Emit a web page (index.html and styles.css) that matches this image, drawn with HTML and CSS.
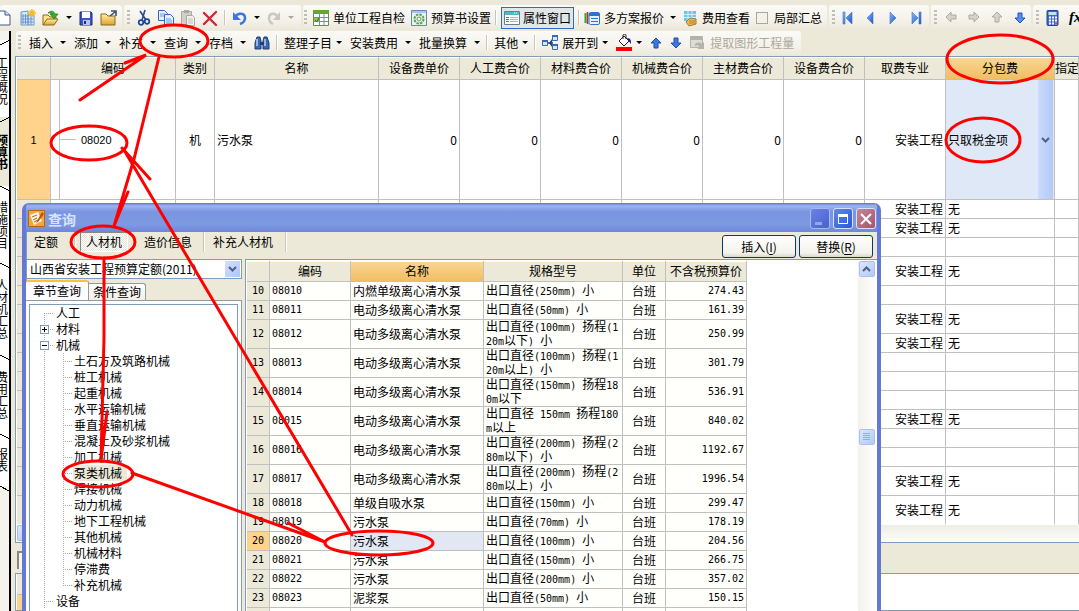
FILE: index.html
```html
<!DOCTYPE html>
<html lang="zh-CN">
<head>
<meta charset="utf-8">
<title>预算书</title>
<link rel="stylesheet" href="styles.css">
</head>
<body>
<svg class="defs" aria-hidden="true">
  <defs>
    <linearGradient id="blue" x1="0" y1="0" x2="1" y2="1"><stop offset="0" stop-color="#8db8ff"/><stop offset="1" stop-color="#1d55c8"/></linearGradient>
    <linearGradient id="gold" x1="0" y1="0" x2="0" y2="1"><stop offset="0" stop-color="#fff0a8"/><stop offset="1" stop-color="#e0a030"/></linearGradient>
    <symbol id="arrow-up" viewBox="0 0 12 16"><path d="M6 3l5 5H8v5H4V8H1z"/></symbol>
    <symbol id="arrow-down" viewBox="0 0 12 16"><path d="M6 13l5-5H8V3H4v5H1z"/></symbol>
  </defs>
</svg>

<header class="bar bar-main">
  <div class="group group-first">
    <button class="tool" aria-label="新建"><svg width="14" height="18" viewBox="0 0 14 18"><path d="M-4 2h9l5 4v10H-4z" fill="#fff" stroke="#3c5a88"/><path d="M5 2v4h5" fill="#cfe0ff" stroke="#3c5a88"/></svg></button>
    <button class="tool" aria-label="新建工程"><svg width="16" height="18" viewBox="0 0 16 18"><path d="M1 3l7-1v14H1zM8 6h6v10H8z" fill="#dbe9fb" stroke="#6b94cc"/><path d="M3 5v10M5.500 5v10M1 7h7M1 10h12M1 13h12M11 7v9" stroke="#6b94cc"/><path d="M12 0v8M8 4h8M9.500 1.500l5 5M14.500 1.500l-5 5" stroke="#f4bd20" stroke-width="1.500"/></svg></button>
    <button class="tool" aria-label="打开"><svg width="18" height="18" viewBox="0 0 18 18"><path d="M1 16V6h5l2 2h6v3" fill="#ffe58a" stroke="#8a6a1c"/><path d="M1 16l4-6h11l-4 6z" fill="url(#gold)" stroke="#8a6a1c"/><path d="M6 4c3-3 6-2 7 1h3l-4 5-4-5h3C10 4 8 4 6 4z" fill="#38b02c" stroke="#156e13" stroke-width=".6"/></svg></button>
    <button class="caret" aria-label="打开选项"></button>
    <button class="tool" aria-label="保存"><svg width="16" height="18" viewBox="0 0 16 18"><path d="M2 3h11l1 1v12H2z" fill="#3e55c4" stroke="#1c2a80"/><path d="M4 3h8v6H4z" fill="#fff"/><path d="M5 11h7v5H5z" fill="#b8c4ec"/><path d="M6 12h2v3H6z" fill="#1c2a80"/></svg></button>
    <button class="tool" aria-label="关闭工程"><svg width="18" height="18" viewBox="0 0 18 18"><path d="M1 16V5h5l2 2h7v9z" fill="url(#gold)" stroke="#8a6a1c"/><path d="M10 7l5-4m-4-1h5v5" fill="none" stroke="#3b5070" stroke-width="1.600"/></svg></button>
  </div>
  <div class="group">
    <span class="grip"></span>
    <button class="tool" aria-label="剪切"><svg width="16" height="18" viewBox="0 0 16 18"><path d="M4 2l6 9M9 1L6 11" stroke="#2c4c88" stroke-width="1.600"/><circle cx="5" cy="13.500" r="2.300" fill="none" stroke="#17469c" stroke-width="1.700"/><circle cx="11" cy="12.500" r="2.300" fill="none" stroke="#17469c" stroke-width="1.700"/></svg></button>
    <button class="tool" aria-label="复制"><svg width="16" height="18" viewBox="0 0 16 18"><path d="M0.500 1.500h6l3 3v7h-9z" fill="#e4efff" stroke="#3568bc"/><path d="M6.500 5.500h6l3 3v8h-9z" fill="#e4efff" stroke="#3568bc"/><path d="M2 5h5M2 7h4M8 10h5M8 12h6M8 14h6" stroke="#6d9be0"/></svg></button>
    <button class="tool" aria-label="粘贴" disabled><svg width="16" height="18" viewBox="0 0 16 18"><path d="M1.500 2.500h10v13h-10z" fill="#d0cfc9" stroke="#aaa9a0"/><path d="M4 1h5v3H4z" fill="#aaa9a0"/><path d="M6.500 6.500h6l2 2v8h-8z" fill="#f2f1ec" stroke="#aaa9a0"/><path d="M8 10h5M8 12h5M8 14h5" stroke="#c0bfb8"/></svg></button>
    <button class="tool" aria-label="删除"><svg width="16" height="18" viewBox="0 0 16 18"><path d="M2 4l12 12M14 3L2 15" stroke="#d42438" stroke-width="2.400" stroke-linecap="round"/></svg></button>
    <span class="sep"></span>
    <button class="tool" aria-label="撤销"><svg width="16" height="18" viewBox="0 0 16 18"><path d="M3 8c3-5 10-4 10 1 0 3-2 5-5 6" fill="none" stroke="#3c78dc" stroke-width="2.600"/><path d="M1 3v8h8z" fill="#3c78dc"/></svg></button>
    <button class="caret" aria-label="撤销列表"></button>
    <button class="tool" aria-label="恢复" disabled><svg width="16" height="18" viewBox="0 0 16 18"><path d="M12 8C9 3 3 4 3 9c0 3 2 5 4 6" fill="none" stroke="#c8c7c0" stroke-width="2.400"/><path d="M14 3v8H7z" fill="#c8c7c0"/></svg></button>
    <button class="caret caret-off" aria-label="恢复列表" disabled></button>
  </div>
  <div class="group group-tight">
    <span class="grip"></span>
    <button class="tool"><svg width="16" height="18" viewBox="0 0 16 18"><path d="M.5 1.500h15v15H.5z" fill="#fff" stroke="#6a8a50"/><path d="M0 1h16v4H0z" fill="#62a82c"/><path d="M1 8.500h14M1 12.500h14M6.500 5v11M11 5v11" stroke="#7c8c9c"/><path d="M1 9h5v4H1z" fill="#8cc850"/><path d="M2 11l1.500 2L6 9" fill="none" stroke="#286a10"/></svg>单位工程自检</button>
    <button class="tool"><svg width="16" height="18" viewBox="0 0 16 18"><path d="M.5 1.500h15v15H.5z" fill="#e8f4e4" stroke="#6686b8"/><path d="M1 2h14v2H1z" fill="#a8c4ec"/><circle cx="8" cy="10" r="4.500" fill="none" stroke="#58a058" stroke-width="2" stroke-dasharray="2.500 1"/><circle cx="8" cy="10" r="2" fill="#fff" stroke="#58a058"/></svg>预算书设置</button>
    <span class="sep"></span>
    <button class="tool tool-on" aria-pressed="true"><svg width="16" height="18" viewBox="0 0 16 18"><path d="M.5 2.500h15v13H.5z" fill="#fff" stroke="#6a7a90"/><path d="M1 3h14v3H1z" fill="#4cbcc0"/><path d="M10 4h1m1 0h1" stroke="#fff"/><path d="M2 8.500h3M2 10.500h3M2 12.500h3" stroke="#4878b8"/><path d="M6 8.500h8M6 10.500h8M6 12.500h8" stroke="#a8b4c0"/></svg>属性窗口</button>
    <span class="sep"></span>
    <button class="tool"><svg width="16" height="18" viewBox="0 0 16 18"><path d="M1.500 4v10" stroke="#1cb030" stroke-width="2"/><path d="M3.500 3v12" stroke="#e02020" stroke-width="1.500"/><rect x="5" y="3.500" width="10.500" height="12" rx="1.500" fill="#e6f0ff" stroke="#2c70dc"/><path d="M5 4h10v3H5z" fill="#2c70dc"/><path d="M7 9.500h7M7 12.500h7" stroke="#2c70dc"/></svg>多方案报价</button>
    <button class="caret" aria-label="多方案报价选项"></button>
    <button class="tool"><svg width="16" height="18" viewBox="0 0 16 18"><path d="M2 2h12v10H2z" fill="#68c8ec"/><path d="M2 5.500h12M2 8.500h12M6 2v10M10 2v10" stroke="#d4f2fc"/><path d="M4 13l4-4 6 1v5l-7 2z" fill="#eab858" stroke="#a87828"/><path d="M7 12h6M7 14h6" stroke="#a87828" stroke-width=".8"/></svg>费用查看</button>
    <input class="check" type="checkbox" id="partial"><label for="partial">局部汇总</label>
  </div>
  <div class="group group-nav">
    <span class="grip"></span>
    <button class="tool" aria-label="首条"><svg width="16" height="18" viewBox="0 0 16 18"><path d="M1 3h2v12H1zM10 3v12L4 9z" fill="url(#blue)" stroke="#3a70d8" stroke-width=".6"/></svg></button>
    <button class="tool" aria-label="上一条"><svg width="16" height="18" viewBox="0 0 16 18"><path d="M8 3v12L2 9z" fill="url(#blue)" stroke="#3a70d8" stroke-width=".6"/></svg></button>
    <button class="tool" aria-label="下一条"><svg width="16" height="18" viewBox="0 0 16 18"><path d="M2 3v12l6-6z" fill="url(#blue)" stroke="#3a70d8" stroke-width=".6"/></svg></button>
    <button class="tool" aria-label="末条"><svg width="16" height="18" viewBox="0 0 16 18"><path d="M8 3h2v12H8zM1 3v12l6-6z" fill="url(#blue)" stroke="#3a70d8" stroke-width=".6"/></svg></button>
  </div>
  <div class="group group-nav">
    <span class="grip"></span>
    <button class="tool" aria-label="左移" disabled><svg width="16" height="18" viewBox="0 0 16 18"><path d="M2 8l5-5v3h5v4H7v3z" fill="#d4d3cc" stroke="#aaa9a2"/></svg></button>
    <button class="tool" aria-label="右移" disabled><svg width="16" height="18" viewBox="0 0 16 18"><path d="M12 8L7 3v3H2v4h5v3z" fill="#d4d3cc" stroke="#aaa9a2"/></svg></button>
    <button class="tool" aria-label="上移" disabled><svg width="16" height="18" viewBox="0 0 16 18"><path d="M7 3l5 5H9v5H5V8H2z" fill="#d4d3cc" stroke="#aaa9a2"/></svg></button>
    <button class="tool" aria-label="下移"><svg width="16" height="18" viewBox="0 0 16 18"><path d="M7 14l5-5H9V4H5v5H2z" fill="#5890f0" stroke="#1c50b8"/></svg></button>
  </div>
  <div class="group group-nav group-last">
    <span class="grip"></span>
    <button class="tool" aria-label="计算器"><svg width="16" height="18" viewBox="0 0 16 18"><rect x="1" y="1.500" width="11" height="15" rx="1" fill="#3c68c8" stroke="#24428c"/><path d="M2.500 3h8v3h-8z" fill="#c0e4f8"/><path d="M3 8.500h8M3 11.500h8M3 14.500h8" stroke="#fff" stroke-width="2" stroke-dasharray="2 1"/><path d="M9 14.500h2" stroke="#f04040" stroke-width="2"/></svg></button>
    <button class="tool fx" aria-label="函数">fx</button>
  </div>
</header>

<div class="desk">
  <nav class="rail">
    <a class="rail-tab rise t1" href="#">工程概况</a>
    <a class="rail-tab rise t2 current" href="#">预算书</a>
    <a class="rail-tab t3" href="#">措施项目</a>
    <a class="rail-tab t4" href="#">人材机汇总</a>
    <a class="rail-tab t5" href="#">费用汇总</a>
    <a class="rail-tab t6" href="#">报表</a>
    <span class="rail-end"></span>
  </nav>

  <main class="work">
    <div class="bar bar-edit">
      <div class="group group-edit">
        <span class="grip"></span>
        <button class="drop">插入<i class="caret"></i></button>
        <button class="drop">添加<i class="caret"></i></button>
        <button class="drop">补充<i class="caret"></i></button>
        <button class="drop">查询<i class="caret"></i></button>
        <button class="drop">存档<i class="caret"></i></button>
        <button class="tool" aria-label="查找"><svg width="16" height="18" viewBox="0 0 16 18"><path d="M3 3h3l1 4v8H1V9zM13 3h-3L9 7v8h6V9z" fill="#3c68b0" stroke="#203c74"/><path d="M6 8h4v3H6z" fill="#203c74"/><path d="M3 5v7M11 5v7" stroke="#b8d0f4" stroke-width="1.500"/></svg></button>
        <span class="sep"></span>
        <button class="drop snug">整理子目<i class="caret"></i></button>
        <button class="drop">安装费用<i class="caret"></i></button>
        <button class="drop">批量换算<i class="caret"></i></button>
        <span class="sep"></span>
        <button class="drop snug">其他<i class="caret"></i></button>
        <span class="sep"></span>
        <button class="drop snug"><svg width="16" height="18" viewBox="0 0 16 18"><path d="M5 9h6M8 9l3-4M8 9l3 4" stroke="#203c74" stroke-width="1.500"/><path d="M.5 6.500h5v5h-5zM10.500 1.500h5v5h-5zM10.500 10.500h5v5h-5z" fill="#d8e8fc" stroke="#3c68b8"/><path d="M0 6h6v2H0zM10 1h6v2h-6zM10 10h6v2h-6z" fill="#3c68b8"/></svg>展开到<i class="caret"></i></button>
        <button class="drop snug" aria-label="填充颜色"><svg width="16" height="18" viewBox="0 0 16 18"><path d="M3 7l5-5 5 5-5 5z" fill="#fff" stroke="#222"/><path d="M7 5V1c0-1 3-1 3 0v4" fill="none" stroke="#222"/><path d="M11 4c4 0 4 3 4 6l-3-4z" fill="#10208c"/><path d="M0 13h16v4H0z" fill="#f00"/></svg><i class="caret"></i></button>
        <button class="tool arrow" aria-label="上移"><svg width="12" height="16"><use href="#arrow-up"/></svg></button>
        <button class="tool arrow" aria-label="下移"><svg width="12" height="16"><use href="#arrow-down"/></svg></button>
        <button class="tool" disabled><svg width="16" height="18" viewBox="0 0 16 18"><path d="M.5 2.500h12v11H.5z" fill="#dcdbd4" stroke="#b4b3aa"/><path d="M1 3h11v3H1z" fill="#b4b3aa"/><path d="M5 10c4-3 6-1 7 0l2-2v7H7l3-2c-2-2-3-2-5-1z" fill="#b4b3aa"/></svg>提取图形工程量</button>
      </div>
    </div>

    <section class="frame">
      <table class="sheet">
        <colgroup><col class="c-num"><col class="c-code"><col class="c-kind"><col class="c-name"><col class="c-fee"><col class="c-fee"><col class="c-fee"><col class="c-fee"><col class="c-fee"><col class="c-fee"><col class="c-fee"><col class="c-sub"><col></colgroup>
        <thead><tr><th></th><th>编码</th><th>类别</th><th>名称</th><th>设备费单价</th><th>人工费合价</th><th>材料费合价</th><th>机械费合价</th><th>主材费合价</th><th>设备费合价</th><th>取费专业</th><th class="hot">分包费</th><th class="cut">指定</th></tr></thead>
        <tbody>
          <tr class="r-big"><th class="picked">1</th><td class="branch">08020</td><td class="mid">机</td><td>污水泵</td><td class="num">0</td><td class="num">0</td><td class="num">0</td><td class="num">0</td><td class="num">0</td><td class="num">0</td><td class="num">安装工程</td><td class="editing"><select aria-label="分包费"><option>只取税金项</option><option>无</option></select></td><td></td></tr>
          <tr><th></th><td></td><td></td><td></td><td></td><td></td><td></td><td></td><td></td><td></td><td class="num">安装工程</td><td>无</td><td></td></tr>
          <tr><th></th><td></td><td></td><td></td><td></td><td></td><td></td><td></td><td></td><td></td><td class="num">安装工程</td><td>无</td><td></td></tr>
          <tr><th></th><td></td><td></td><td></td><td></td><td></td><td></td><td></td><td></td><td></td><td></td><td></td><td></td></tr>
          <tr class="r-two"><th></th><td></td><td></td><td></td><td></td><td></td><td></td><td></td><td></td><td></td><td class="num">安装工程</td><td>无</td><td></td></tr>
          <tr><th></th><td></td><td></td><td></td><td></td><td></td><td></td><td></td><td></td><td></td><td></td><td></td><td></td></tr>
          <tr class="r-two"><th></th><td></td><td></td><td></td><td></td><td></td><td></td><td></td><td></td><td></td><td class="num">安装工程</td><td>无</td><td></td></tr>
          <tr><th></th><td></td><td></td><td></td><td></td><td></td><td></td><td></td><td></td><td></td><td class="num">安装工程</td><td>无</td><td></td></tr>
          <tr><th></th><td></td><td></td><td></td><td></td><td></td><td></td><td></td><td></td><td></td><td></td><td></td><td></td></tr>
          <tr><th></th><td></td><td></td><td></td><td></td><td></td><td></td><td></td><td></td><td></td><td></td><td></td><td></td></tr>
          <tr><th></th><td></td><td></td><td></td><td></td><td></td><td></td><td></td><td></td><td></td><td></td><td></td><td></td></tr>
          <tr><th></th><td></td><td></td><td></td><td></td><td></td><td></td><td></td><td></td><td></td><td class="num">安装工程</td><td>无</td><td></td></tr>
          <tr><th></th><td></td><td></td><td></td><td></td><td></td><td></td><td></td><td></td><td></td><td></td><td></td><td></td></tr>
          <tr><th></th><td></td><td></td><td></td><td></td><td></td><td></td><td></td><td></td><td></td><td></td><td></td><td></td></tr>
          <tr class="r-two"><th></th><td></td><td></td><td></td><td></td><td></td><td></td><td></td><td></td><td></td><td class="num">安装工程</td><td>无</td><td></td></tr>
          <tr class="r-two r-end"><th></th><td></td><td></td><td></td><td></td><td></td><td></td><td></td><td></td><td></td><td class="num">安装工程</td><td>无</td><td></td></tr>
        </tbody>
      </table>
      <div class="hscroll"><button class="scroll-btn" aria-label="向左滚动"></button></div>
    </section>
    <div class="gap-strip"><span class="mini-tab"></span></div>
    <section class="frame frame-low"><div class="low-head"></div><div class="low-row"></div></section>
  </main>
</div>

<section class="dialog" role="dialog" aria-labelledby="dlg-title">
  <div class="titlebar">
    <svg width="17" height="17" viewBox="0 0 17 17"><path d="M.5.5h16v16H.5z" fill="#f0a838" stroke="#b86808"/><path d="M2 5l8-3 4 9-8 4z" fill="#fff8e0"/><path d="M4 7l5-2M5 10l4-2M6 12l4-2" stroke="#a86818"/><path d="M14 2l-5 9-1 2 2-1 6-8z" fill="#b8501c"/></svg>
    <h1 id="dlg-title">查询</h1>
    <button class="win" aria-label="最小化"><svg width="18" height="18"><path d="M4 12h7v3H4z" fill="#8fa8f0"/></svg></button>
    <button class="win win-max" aria-label="最大化"><svg width="18" height="18"><path d="M4.500 4.500h9v9h-9z" fill="none" stroke="#fff"/><path d="M4 4h10v3H4z" fill="#fff"/></svg></button>
    <button class="win win-close" aria-label="关闭"><svg width="18" height="18"><path d="M4 4l10 10M14 4L4 14" stroke="#fff" stroke-width="2"/></svg></button>
  </div>
  <div class="modes">
    <button class="mode">定额</button><span class="sep"></span>
    <button class="mode mode-on" aria-pressed="true">人材机</button>
    <button class="mode">造价信息</button><span class="sep"></span>
    <button class="mode">补充人材机</button><span class="sep"></span>
    <div class="actions"><button class="push">插入(<u>I</u>)</button><button class="push">替换(<u>R</u>)</button></div>
  </div>
  <div class="panes">
    <aside class="side">
      <select class="book" aria-label="定额库"><option>山西省安装工程预算定额(2011)</option></select>
      <div class="tabs" role="tablist"><button class="tab tab-on" role="tab" aria-selected="true">章节查询</button><button class="tab" role="tab">条件查询</button></div>
      <div class="tabpane">
        <ul class="tree">
          <li>人工</li>
          <li><button class="twist" aria-label="展开"><svg width="9" height="9"><path d="M2 4.500h5M4.500 2v5" stroke="#000"/></svg></button>材料</li>
          <li><button class="twist" aria-label="折叠"><svg width="9" height="9"><path d="M2 4.500h5" stroke="#000"/></svg></button>机械
            <ul>
              <li>土石方及筑路机械</li><li>桩工机械</li><li>起重机械</li><li>水平运输机械</li><li>垂直运输机械</li><li>混凝土及砂浆机械</li><li>加工机械</li><li><span class="chosen">泵类机械</span></li><li>焊接机械</li><li>动力机械</li><li>地下工程机械</li><li>其他机械</li><li>机械材料</li><li>停滞费</li><li>补充机械</li>
            </ul>
          </li>
          <li>设备</li>
        </ul>
      </div>
    </aside>
    <div class="results">
      <div class="results-body">
        <table class="sheet list">
          <colgroup><col class="d-num"><col class="d-code"><col class="d-name"><col class="d-spec"><col class="d-unit"><col class="d-price"></colgroup>
          <thead><tr><th></th><th>编码</th><th class="hot">名称</th><th>规格型号</th><th>单位</th><th>不含税预算价</th></tr></thead>
          <tbody>
            <tr><th>10</th><td class="m">08010</td><td>内燃单级离心清水泵</td><td>出口直径<b>(250mm) </b>小</td><td class="mid">台班</td><td class="num m">274.43</td></tr>
            <tr><th>11</th><td class="m">08011</td><td>电动多级离心清水泵</td><td>出口直径<b>(50mm) </b>小</td><td class="mid">台班</td><td class="num m">161.39</td></tr>
            <tr class="r-two"><th>12</th><td class="m">08012</td><td>电动多级离心清水泵</td><td>出口直径<b>(100mm) </b>扬程<b>(1<br>20m</b>以下<b>) </b>小</td><td class="mid">台班</td><td class="num m">250.99</td></tr>
            <tr class="r-two"><th>13</th><td class="m">08013</td><td>电动多级离心清水泵</td><td>出口直径<b>(100mm) </b>扬程<b>(1<br>20m</b>以上<b>) </b>小</td><td class="mid">台班</td><td class="num m">301.79</td></tr>
            <tr class="r-two"><th>14</th><td class="m">08014</td><td>电动多级离心清水泵</td><td>出口直径<b>(150mm) </b>扬程<b>18<br>0m</b>以下</td><td class="mid">台班</td><td class="num m">536.91</td></tr>
            <tr class="r-two"><th>15</th><td class="m">08015</td><td>电动多级离心清水泵</td><td>出口直径<b> 150mm </b>扬程<b>180<br>m</b>以上</td><td class="mid">台班</td><td class="num m">840.02</td></tr>
            <tr class="r-two"><th>16</th><td class="m">08016</td><td>电动多级离心清水泵</td><td>出口直径<b>(200mm) </b>扬程<b>(2<br>80m</b>以下<b>) </b>小</td><td class="mid">台班</td><td class="num m">1192.67</td></tr>
            <tr class="r-two"><th>17</th><td class="m">08017</td><td>电动多级离心清水泵</td><td>出口直径<b>(200mm) </b>扬程<b>(2<br>80m</b>以上<b>) </b>小</td><td class="mid">台班</td><td class="num m">1996.54</td></tr>
            <tr><th>18</th><td class="m">08018</td><td>单级自吸水泵</td><td>出口直径<b>(150mm) </b>小</td><td class="mid">台班</td><td class="num m">299.47</td></tr>
            <tr><th>19</th><td class="m">08019</td><td>污水泵</td><td>出口直径<b>(70mm) </b>小</td><td class="mid">台班</td><td class="num m">178.19</td></tr>
            <tr><th class="picked">20</th><td class="m">08020</td><td class="focus">污水泵</td><td>出口直径<b>(100mm) </b>小</td><td class="mid">台班</td><td class="num m">204.56</td></tr>
            <tr><th>21</th><td class="m">08021</td><td>污水泵</td><td>出口直径<b>(150mm) </b>小</td><td class="mid">台班</td><td class="num m">266.75</td></tr>
            <tr><th>22</th><td class="m">08022</td><td>污水泵</td><td>出口直径<b>(200mm) </b>小</td><td class="mid">台班</td><td class="num m">357.02</td></tr>
            <tr><th>23</th><td class="m">08023</td><td>泥浆泵</td><td>出口直径<b>(50mm) </b>小</td><td class="mid">台班</td><td class="num m">150.15</td></tr>
            <tr><th></th><td></td><td></td><td></td><td></td><td></td></tr>
          </tbody>
        </table>
      </div>
      <div class="vscroll">
        <button class="scroll-btn" aria-label="向上滚动"><svg width="9" height="6"><path d="M1 5l3.500-3.500L8 5" fill="none" stroke="#4d6185" stroke-width="2"/></svg></button>
        <span class="above"></span>
        <span class="scroll-btn thumb"><svg width="7" height="8"><path d="M0 .5h7M0 2.500h7M0 4.500h7M0 6.500h7" stroke="#8cb0f8"/></svg></span>
        <span class="below"></span>
      </div>
    </div>
  </div>
</section>

<svg class="marks" width="1079" height="611" viewBox="0 0 1079 611" aria-hidden="true">
  <g fill="none" stroke="#f00" stroke-width="3" stroke-linecap="round">
    <ellipse cx="174" cy="41" rx="34" ry="16"/>
    <ellipse cx="89" cy="143" rx="38" ry="17"/>
    <ellipse cx="103" cy="242" rx="32" ry="16"/>
    <ellipse cx="98" cy="474" rx="35" ry="13"/>
    <ellipse cx="379" cy="543" rx="54" ry="12"/>
    <ellipse cx="1000" cy="59" rx="53" ry="24"/>
    <ellipse cx="983" cy="140" rx="37" ry="22"/>
    <path d="M80 100L146 55L125 63M159 57L134 159L114 226L128 192M104 258V338L101 460L107 412M124 150L352 535M122 148L150 179M132 473L325 542L288 523"/>
  </g>
</svg>
</body>
</html>
```

FILE: styles.css
```css
* { box-sizing: border-box; }
html, body { height: 100%; }
body {
  margin: 0;
  display: flex;
  flex-direction: column;
  overflow: hidden;
  position: relative;
  background: #ece9d8;
  color: #000;
  font: 12px/16px "Noto Sans CJK SC", sans-serif;
}
button, select { font: inherit; color: inherit; }
button { border: 0; padding: 0; background: none; white-space: nowrap; }
svg { display: block; flex: none; }
.defs { position: absolute; width: 0; height: 0; }

/* toolbars */
.bar { display: flex; flex: none; }
.bar-main { padding-top: 5px; gap: 2px; height: 31px; }
.group {
  display: flex;
  flex: none;
  align-items: center;
  gap: 6px;
  height: 25px;
  padding: 0 7px 0 3px;
  border-radius: 3px;
  background: linear-gradient(#fbfaf7, #f4f2ea 60%, #ebe8da);
}
.group-first { padding: 0 4px 0 0; }
.group-tight { padding: 0 5px 0 1px; }
.group-nav { gap: 7px; padding-right: 2px; }
.group-last { flex: 1 0 auto; }
.group-edit { gap: 8px; padding: 0 7px 2px 2px; }
.grip {
  width: 3px;
  height: 15px;
  background: repeating-linear-gradient(#c1beb1 0 2px, transparent 2px 4px);
}
.sep { flex: none; width: 2px; height: 15px; background: #c9c6b8; border-right: 1px solid #fff; }
.group-tight .sep, .group-edit .sep { margin: 0 -2px; }
.tool { display: flex; align-items: center; gap: 4px; }
.tool:disabled { color: #aca899; }
.tool-on { height: 22px; padding: 0 2px; gap: 3px; border: 1px solid #316ac5; background: #e1e6e8; }
.caret { width: 6px; height: 3px; flex: none; background: #000; clip-path: polygon(0 0, 100% 0, 50% 100%); }
.caret-off { background: #aca899; }
.check { appearance: none; width: 12px; height: 12px; margin: 0; border: 1px solid #aca899; background: #f3f1e9; }
.drop { display: flex; align-items: center; gap: 7px; }
.snug { gap: 4px; }
.arrow { fill: #3c78e0; stroke: #1c50b0; }
.fx { font: italic bold 15px "Liberation Serif", serif; }

/* left rail */
.desk { flex: 1; min-height: 0; display: flex; }
.rail {
  flex: none;
  width: 11px;
  display: flex;
  flex-direction: column;
  overflow: hidden;
  padding-top: 9px;
  border-right: 2px solid #000;
  background: #f5f4ec;
}
.rail-tab {
  flex: none;
  display: flex;
  align-items: center;
  justify-content: center;
  width: 11px;
  writing-mode: vertical-rl;
  text-orientation: upright;
  line-height: 16px;
  color: #000;
  text-decoration: none;
  white-space: nowrap;
  padding-right: 8px;
  background: linear-gradient(to top right, transparent 44%, #000 44% 56%, transparent 56%) 0 0 / 10px 5px no-repeat #fff;
}
.rise { background-image: linear-gradient(to bottom right, transparent 44%, #000 44% 56%, transparent 56%); }
.current { font-weight: bold; background-color: #ece9d8; }
.t1 { height: 77px; padding-top: 4px; }
.t2 { height: 69px; }
.t3 { height: 77px; }
.t4 { height: 92px; }
.t5 { height: 79px; }
.t6 { height: 52px; }
.rail-end { height: 5px; background: linear-gradient(to top right, transparent 44%, #000 44% 56%, transparent 56%); }

/* workspace */
.work { flex: 1; min-width: 0; display: flex; flex-direction: column; padding-left: 4px; }
.bar-edit { padding-left: 1px; height: 25px; }
.frame { flex: none; overflow: hidden; border: 1px solid #7f9db9; border-width: 1px 0 1px 1px; padding-left: 1px; background: #fff; }
.sheet { width: 100%; table-layout: fixed; border-collapse: separate; border-spacing: 0; line-height: 14px; }
.sheet th, .sheet td {
  padding: 0 2px;
  border: 0 solid #c0c0c0;
  border-width: 0 1px 1px 0;
  font-weight: normal;
  text-align: left;
  white-space: nowrap;
  overflow: hidden;
}
.sheet th { background: #ece9d8; text-align: center; }
.sheet thead th { height: 23px; box-shadow: inset 0 1px #fff; }
.sheet thead .hot { background: linear-gradient(#f8d896, #f2bd62); }
.sheet thead .cut { padding: 0; text-align: left; }
.sheet tbody tr { height: 19px; }
.sheet tbody .r-two { height: 29px; }
.sheet tbody .r-big { height: 120px; }
.sheet tbody th { font: 11px/12px "Liberation Sans", sans-serif; }
.sheet .picked { background: #ffd38c; }
.sheet .num { text-align: right; }
.sheet .mid { text-align: center; }
.r-end td, .r-end th { border-bottom-color: #fff; }
.sheet .branch {
  padding-left: 30px;
  font: 11px/12px "Liberation Sans", sans-serif;
  background: linear-gradient(#c0c0c0, #c0c0c0) 8px 0 / 1px 100% no-repeat, linear-gradient(#c0c0c0, #c0c0c0) 8px 50% / 17px 1px no-repeat;
}
.sheet .editing { padding: 0; background: #dfe8f6; }
.editing select {
  appearance: none;
  display: block;
  width: 100%;
  height: 119px;
  padding: 0 17px 0 2px;
  border: 0;
  border-radius: 0;
  background:
    url("data:image/svg+xml,%3Csvg xmlns='http://www.w3.org/2000/svg' width='9' height='6'%3E%3Cpath d='M1 1l3.500 3.500L8 1' fill='none' stroke='%234d6185' stroke-width='2'/%3E%3C/svg%3E") right 4px center no-repeat,
    linear-gradient(90deg, #cbdafd, #b4c9f6) right 1px center / 15px 100% no-repeat,
    #dfe8f6;
}
.c-num { width: 34px; }
.c-code { width: 125px; }
.c-kind { width: 39px; }
.c-name { width: 164px; }
.c-fee { width: 81px; }
.c-sub { width: 109px; }
.hscroll { height: 17px; background: linear-gradient(#eeede5, #fefefb); }
.scroll-btn {
  flex: none;
  display: flex;
  align-items: center;
  justify-content: center;
  width: 16px;
  height: 16px;
  border: 1px solid #a9bff0;
  border-radius: 2px;
  background: linear-gradient(135deg, #dbe6ff, #b4c9f9);
}
.gap-strip { flex: none; height: 30px; padding-top: 8px; }
.mini-tab { display: block; width: 60px; height: 18px; margin-left: 2px; border: 2px solid #8a887c; border-width: 2px 0 0 2px; background: #f6f5ee; }
.frame-low { flex: 1; }
.low-head { width: 34px; height: 21px; background: #ece9d8; border-bottom: 1px solid #c0c0c0; }
.low-row { width: 34px; height: 40px; background: #ffd38c; }

/* query window */
.dialog {
  position: absolute;
  left: 22px;
  top: 203px;
  bottom: 0;
  width: 859px;
  display: flex;
  flex-direction: column;
  overflow: hidden;
  border: solid #6678d6;
  border-width: 0 4px;
  border-radius: 7px 7px 0 0;
  background: #ece9d8;
  box-shadow: inset 1px 0 #7f9db9;
}
.titlebar {
  flex: none;
  display: flex;
  align-items: center;
  gap: 3px;
  height: 29px;
  margin: 0 -4px;
  padding: 2px 5px 0;
  background: linear-gradient(#5f74d4, #9db4f0 10%, #7b96e0 30%, #7d99e2 75%, #6f86dc);
}
.titlebar h1 { flex: 1; margin: 0; font-size: 14px; line-height: 20px; color: #d8e4f8; }
.win { width: 20px; height: 21px; border: 1px solid #a8b8f0; border-radius: 3px; background: linear-gradient(135deg, #6c84e4, #4860d0); }
.win-max { background: linear-gradient(135deg, #5c88ec, #2c58dc); border-color: #d8e0fc; }
.win-close { background: linear-gradient(135deg, #c08898, #a85468); border-color: #d8e0fc; }
.titlebar > svg { margin-left: 1px; }
.modes { flex: none; display: flex; align-items: flex-start; height: 27px; }
.modes .sep { height: 20px; }
.mode { height: 20px; padding: 0 10px 0 8px; }
.mode + .sep { margin-left: 6px; }
.mode-on { padding: 0 5px; border: 1px solid #8a887c; border-color: #8a887c #fff #fff #8a887c; background: repeating-conic-gradient(#fff 0 25%, #e8e6da 0 50%) 0 0 / 2px 2px; }
.modes .sep + .mode-on { margin-left: 4px; }
.mode-on + .mode { margin-left: 8px; padding-right: 5px; }
.mode:last-of-type { padding-right: 6px; }
.actions { margin-left: auto; display: flex; gap: 3px; padding: 3px 4px 0 0; }
.push {
  width: 74px;
  height: 23px;
  border: 1px solid #003c74;
  border-radius: 3px;
  background: linear-gradient(#fff, #f3f2ec 80%, #dcd8cc);
}
.push u { text-underline-offset: 2px; }
.panes { flex: 1; min-height: 0; display: flex; gap: 3px; }
.side { flex: none; width: 216px; display: flex; flex-direction: column; }
.book {
  appearance: none;
  flex: none;
  height: 20px;
  padding: 0 20px 0 3px;
  border: 1px solid #7f9db9;
  border-radius: 0;
  background:
    url("data:image/svg+xml,%3Csvg xmlns='http://www.w3.org/2000/svg' width='9' height='6'%3E%3Cpath d='M1 1l3.500 3.500L8 1' fill='none' stroke='%234d6185' stroke-width='2'/%3E%3C/svg%3E") right 4px center no-repeat,
    linear-gradient(135deg, #d4e0fe, #b0c5f6) right 1px center / 15px 16px no-repeat,
    #fff;
}
.tabs { flex: none; display: flex; align-items: flex-end; height: 20px; margin-top: 1px; }
.tab { height: 17px; padding: 0 4px; border: 1px solid #919b9c; border-left: 0; border-bottom: 0; border-radius: 0 3px 0 0; background: linear-gradient(#fff, #f0efe6); }
.tab-on { height: 20px; padding: 0 7px; border-top: 2px solid #ffc03c; border-radius: 3px 3px 0 0; background: #fcfcfe; }
.tabpane { flex: 1; min-height: 0; display: flex; padding: 3px 3px 0; border: 1px solid #919b9c; border-width: 1px 1px 0 0; background: #fcfcfe; }
.tree, .tree ul { list-style: none; margin: 0; padding: 0; }
.tree { flex: 1; overflow: hidden; padding-left: 14px; border: 1px solid #7f9db9; border-bottom: 0; background: #fff; white-space: nowrap; }
.tree li {
  position: relative;
  padding-left: 12px;
  background:
    repeating-linear-gradient(#aca899 0 1px, transparent 1px 2px) 0 0 / 1px 100% no-repeat,
    repeating-linear-gradient(90deg, #aca899 0 1px, transparent 1px 2px) 0 8px / 9px 1px no-repeat;
}
.tree > li:first-child { background-position: 0 8px, 0 8px; }
.tree ul { margin-left: 7px; }
.tree ul li { padding-left: 11px; }
.tree ul li:last-child { background-size: 1px 8px, 9px 1px; }
.twist { position: absolute; left: -4px; top: 4px; width: 9px; height: 9px; background: #fff; box-shadow: 0 0 0 1px #7f9db9 inset; }
.chosen { display: inline-block; height: 16px; margin-left: -1px; padding: 0 5px 0 1px; vertical-align: top; background: #ece9d8; }
.results { flex: 1; min-width: 0; display: flex; border: 1px solid #7f9db9; border-width: 1px 0 0 1px; padding: 1px 2px 0 1px; background: #fff; }
.results-body { flex: 1; min-width: 0; overflow: hidden; }
.list { width: 500px; }
.list thead th { height: 21px; }
.list tbody tr td { background: #fffffb; line-height: 12px; }
.list tbody .focus { background: #e1e8f4; }
.list b, .list .m, .list tbody th { font: 10px/12px "DejaVu Sans Mono", monospace; white-space: pre; }
.d-num { width: 23px; }
.d-code { width: 81px; }
.d-name { width: 133px; }
.d-spec { width: 139px; }
.d-unit { width: 43px; }
.d-price { width: 81px; }
.vscroll { flex: none; display: flex; flex-direction: column; align-items: center; width: 17px; background: linear-gradient(90deg, #f3f1ec, #fefefb); }
.above { flex: 11; }
.below { flex: 12; }

/* pen marks over the window */
.marks { position: absolute; left: 0; top: 0; pointer-events: none; }
```
